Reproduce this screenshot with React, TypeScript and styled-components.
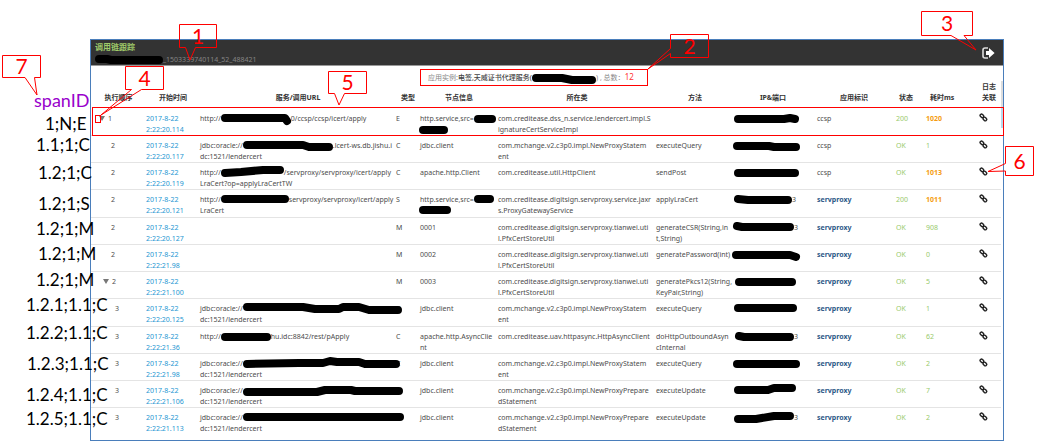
import React from "react";
import styled, { createGlobalStyle } from "styled-components";

const GlobalStyle = createGlobalStyle`
  * { box-sizing: border-box; }
  body {
    margin: 0;
    background: #fff;
    color: #555;
    font-family: "Noto Sans", "Noto Sans CJK SC", sans-serif;
    font-size: 7px;
    line-height: 11px;
  }
`;

const Page = styled.main`
  position: relative;
  padding: 39px 36px 0 90px;
`;

const Panel = styled.section`
  position: relative;
  border: 1px solid #4a7ebb;
  padding-bottom: 5px;
`;

const Header = styled.header`
  display: flex;
  align-items: center;
  justify-content: space-between;
  height: 26px;
  padding: 0 8px 0 4px;
  background: #333;
  border-bottom: 1px solid #999;
`;

const Title = styled.h1`
  margin: 0 0 2px;
  color: #a0cb6a;
  font-size: 8px;
  line-height: 11px;
  font-weight: 700;
`;

const TraceId = styled.p`
  margin: 0;
  color: #858585;
  white-space: nowrap;
`;

const ExitButton = styled.button`
  display: flex;
  padding: 0;
  border: 0;
  background: none;
`;

const Summary = styled.p`
  width: 228px;
  height: 17px;
  margin: 3px 0 0 329px;
  padding: 0 7px;
  border: 1px solid #f00;
  color: #888;
  line-height: 14px;
  white-space: nowrap;
  b { color: #444; font-weight: 500; }
  em { color: #f33; font-style: normal; font-size: 8px; }
`;

const Table = styled.table`
  width: 100%;
  margin-top: -5px;
  table-layout: fixed;
  border-collapse: separate;
  border-spacing: 0;
  padding-right: 2px;
`;

const HeadCell = styled.th<{ $left?: number; $tall?: boolean }>`
  height: 27px;
  padding: ${(p) => (p.$tall ? 0 : 5)}px 0 0 ${(p) => p.$left ?? 0}px;
  color: #333;
  font-weight: 700;
  vertical-align: ${(p) => (p.$tall ? "top" : "middle")};
  text-align: ${(p) => (p.$left === undefined ? "center" : "left")};
  white-space: nowrap;
`;

const Row = styled.tr`
  height: 27px;
  &:nth-child(4n) { height: 28px; }
  &:first-child td { border-top-color: transparent; }
`;

type Tone = "plain" | "time" | "ok" | "slow" | "app";
const tones: Record<Tone, string> = {
  plain: "#4c4c4c",
  time: "#2496d2",
  ok: "#98ca6c",
  slow: "#f59c11",
  app: "#2d5987",
};

const Cell = styled.td<{ $tone?: Tone; $left?: number }>`
  padding: 4px 0 0 ${(p) => p.$left ?? 0}px;
  border-top: 1px solid #e4e4e4;
  vertical-align: top;
  white-space: nowrap;
  color: ${(p) => tones[p.$tone ?? "plain"]};
  font-weight: ${(p) => (p.$tone === "slow" || p.$tone === "app" ? 700 : 400)};
`;

const LinkButton = styled.button`
  display: flex;
  padding: 0;
  border: 0;
  background: none;
  color: #222;
`;

const ScrollTrack = styled.span`
  position: absolute;
  right: 0;
  top: 41px;
  width: 2px;
  height: 47px;
  background: linear-gradient(#ddd 27px, #b5d9ee 27px);
`;

const InkBox = styled.span<{ $width: number }>`
  position: relative;
  z-index: 1;
  display: inline-block;
  width: ${(p) => p.$width}px;
  height: 8px;
  vertical-align: middle;
  svg { display: block; overflow: visible; }
`;

const Toggle = styled.span`
  display: inline-block;
  width: 0;
  height: 0;
  margin-right: 3px;
  border: 3px solid transparent;
  border-top: 5px solid #777;
  border-bottom: 0;
`;

const Labels = styled.ol`
  margin: 0;
  padding: 0;
  list-style: none;
`;

const Label = styled.li<{ $x: number; $y: number; $purple?: boolean }>`
  position: absolute;
  z-index: 2;
  left: ${(p) => p.$x}px;
  top: ${(p) => p.$y - 10}px;
  color: ${(p) => (p.$purple ? "#90c" : "#000")};
  font-family: Lato, sans-serif;
  font-size: ${(p) => (p.$purple ? 18 : 17)}px;
  line-height: 20px;
  white-space: nowrap;
`;

const Outline = styled.span<{ $x: number; $y: number; $w: number; $h: number }>`
  position: absolute;
  z-index: 2;
  left: ${(p) => p.$x}px;
  top: ${(p) => p.$y}px;
  width: ${(p) => p.$w}px;
  height: ${(p) => p.$h}px;
  border: 1px solid #f00;
`;

const RowOutline = styled.span`
  position: absolute;
  z-index: 2;
  left: 92px;
  right: 36px;
  top: 107px;
  height: 29px;
  border: 1px solid #f00;
  pointer-events: none;
`;

const CalloutBox = styled.span<{ $x: number; $y: number; $w: number; $h: number; $fromRight?: boolean }>`
  position: absolute;
  z-index: 3;
  ${(p) => (p.$fromRight ? "right" : "left")}: ${(p) => p.$x}px;
  top: ${(p) => p.$y}px;
  width: ${(p) => p.$w}px;
  height: ${(p) => p.$h}px;
  color: #f00;
  font-family: Lato, sans-serif;
  font-size: 21px;
  line-height: ${(p) => p.$h - 1}px;
  text-align: center;
  svg { position: absolute; left: 0; top: 0; overflow: visible; }
`;

type Ink = { w: number; d: string };

function Redaction({ w, d }: Ink) {
  return (
    <InkBox $width={w}>
      <svg width={w} height="8" fill="none" stroke="#000" strokeWidth="8" strokeLinecap="round" strokeLinejoin="round" aria-hidden="true">
        <path d={d} />
      </svg>
    </InkBox>
  );
}

function Callout({ n, d, ...box }: { n: number; d: string; x: number; y: number; w: number; h: number; right?: boolean }) {
  return (
    <CalloutBox $x={box.x} $y={box.y} $w={box.w} $h={box.h} $fromRight={box.right}>
      <svg width={box.w} height={box.h} fill="none" stroke="#f00" aria-hidden="true">
        <path d={d} />
      </svg>
      {n}
    </CalloutBox>
  );
}

function LinkIcon() {
  return (
    <svg width="9" height="9" viewBox="0 0 9 9" fill="none" stroke="currentColor" strokeWidth="1.4" aria-hidden="true">
      <rect x="-1.9" y="-1.4" width="3.8" height="2.8" rx="1.3" transform="translate(2.9 2.8) rotate(45)" />
      <rect x="-1.9" y="-1.4" width="3.8" height="2.8" rx="1.3" transform="translate(5.9 6) rotate(45)" />
    </svg>
  );
}

function ExitIcon() {
  return (
    <svg width="13" height="12" viewBox="0 0 13 12" aria-hidden="true">
      <path d="M6 1H3Q1 1 1 3V9Q1 11 3 11H6" fill="none" stroke="#ddd" strokeWidth="1.6" />
      <path d="M4 4H7V1L12.6 6L7 11V8H4Z" fill="#fff" />
    </svg>
  );
}

type Part = string | Ink;
type Span = {
  level: number;
  open?: boolean;
  time: string;
  url: Part[][];
  type: string;
  node: Part[][];
  cls: string[];
  method: string[];
  ip: Part[];
  app: string;
  status: string;
  cost: number;
};

const stmt = ["com.mchange.v2.c3p0.impl.NewProxyStatem", "ent"];
const prepared = ["com.mchange.v2.c3p0.impl.NewProxyPrepare", "dStatement"];
const pfx = ["com.creditease.digitsign.servproxy.tianwei.uti", "l.PfxCertStoreUtil"];

const spans: Span[] = [
  {
    level: 1, open: true, time: "2:22:20.114",
    url: [["http://", { w: 70, d: "M4 3H64L66 6" }, "0/ccsp/ccsp/icert/apply"]],
    type: "E",
    node: [["http.service,src=", { w: 22, d: "M4 4H18" }], [{ w: 28, d: "M3 4H24" }]],
    cls: ["com.creditease.dss_n.service.lendercert.impl.S", "ignatureCertServiceImpl"],
    method: [], ip: [{ w: 65, d: "M4 4H50L56 3L61 4" }], app: "ccsp", status: "200", cost: 1020,
  },
  {
    level: 2, time: "2:22:20.117",
    url: [["jdbc:oracle://", { w: 90, d: "M4 3H60L66 5H86" }, ".lcert-ws.db.jishu.i"], ["dc:1521/lendercert"]],
    type: "C", node: [["jdbc.client"]], cls: stmt, method: ["executeQuery"],
    ip: [{ w: 66, d: "M3 4H35L40 5H62" }], app: "ccsp", status: "OK", cost: 1,
  },
  {
    level: 2, time: "2:22:20.119",
    url: [["http://", { w: 63, d: "M4 4L20 3L42 1H59" }, "/servproxy/servproxy/icert/apply"], ["LraCert?op=applyLraCertTW"]],
    type: "C", node: [["apache.http.Client"]], cls: ["com.creditease.util.HttpClient"], method: ["sendPost"],
    ip: [{ w: 65, d: "M4 4H61" }], app: "ccsp", status: "OK", cost: 1013,
  },
  {
    level: 2, time: "2:22:20.121",
    url: [["http://", { w: 68, d: "M4 3H64" }, "servproxy/servproxy/icert/apply"], ["LraCert"]],
    type: "S", node: [["http.service,src=", { w: 19, d: "M4 3H16" }], [{ w: 30, d: "M3 3H27" }]],
    cls: ["com.creditease.digitsign.servproxy.service.jaxr", "s.ProxyGatewayService"], method: ["applyLraCert"],
    ip: [{ w: 58, d: "M4 3L14 4H54" }, "3"], app: "servproxy", status: "200", cost: 1011,
  },
  {
    level: 2, time: "2:22:20.127", url: [], type: "M", node: [["0001"]], cls: pfx, method: ["generateCSR(String,in", "t,String)"],
    ip: [{ w: 60, d: "M3 2L8 3H56" }, "3"], app: "servproxy", status: "OK", cost: 908,
  },
  {
    level: 2, time: "2:22:21.98", url: [], type: "M", node: [["0002"]], cls: pfx, method: ["generatePassword(int)"],
    ip: [{ w: 66, d: "M2 4H56L62 6" }], app: "servproxy", status: "OK", cost: 0,
  },
  {
    level: 2, open: true, time: "2:22:21.100", url: [], type: "M", node: [["0003"]], cls: pfx, method: ["generatePkcs12(String,", "KeyPair,String)"],
    ip: [{ w: 62, d: "M5 4H58" }], app: "servproxy", status: "OK", cost: 5,
  },
  {
    level: 3, time: "2:22:20.125",
    url: [["jdbc:oracle://", { w: 159, d: "M4 2H60L72 4H96L100 2H116L126 5H155" }], ["dc:1521/lendercert"]],
    type: "C", node: [["jdbc.client"]], cls: stmt, method: ["executeQuery"],
    ip: [{ w: 63, d: "M4 3H59" }], app: "servproxy", status: "OK", cost: 1,
  },
  {
    level: 3, time: "2:22:21.36",
    url: [["http://", { w: 50, d: "M4 4H46" }, "hu.idc:8842/rest/pApply"]],
    type: "C", node: [["apache.http.AsyncClie"], ["nt"]], cls: ["com.creditease.uav.httpasync.HttpAsyncClient"],
    method: ["doHttpOutboundAsyn", "cInternal"],
    ip: [{ w: 60, d: "M5 3L10 4H56" }, "3"], app: "servproxy", status: "OK", cost: 62,
  },
  {
    level: 3, time: "2:22:21.98",
    url: [["jdbc:oracle://", { w: 157, d: "M4 4L56 3H80L87 1L94 2H116L122 4H153" }], ["dc:1521/lendercert"]],
    type: "C", node: [["jdbc.client"]], cls: stmt, method: ["executeQuery"],
    ip: [{ w: 66, d: "M3 4H62" }], app: "servproxy", status: "OK", cost: 2,
  },
  {
    level: 3, time: "2:22:21.106",
    url: [["jdbc:oracle://", { w: 160, d: "M4 5H74L82 3H108L112 4H156" }], ["dc:1521/lendercert"]],
    type: "C", node: [["jdbc.client"]], cls: prepared, method: ["executeUpdate"],
    ip: [{ w: 62, d: "M4 3H34L40 1H58" }], app: "servproxy", status: "OK", cost: 7,
  },
  {
    level: 3, time: "2:22:21.113",
    url: [["jdbc:oracle://", { w: 161, d: "M4 3H157" }], ["dc:1521/lendercert"]],
    type: "C", node: [["jdbc.client"]], cls: prepared, method: ["executeUpdate"],
    ip: [{ w: 60, d: "M4 5H22L40 2H56" }, "3"], app: "servproxy", status: "OK", cost: 2,
  },
];

function Parts({ parts }: { parts: Part[] }) {
  return <>{parts.map((p, i) => (typeof p === "string" ? <span key={i}>{p}</span> : <Redaction key={i} {...p} />))}</>;
}

function Lines({ lines }: { lines: Part[][] }) {
  return <>{lines.map((l, i) => <React.Fragment key={i}>{i > 0 && <br />}<Parts parts={l} /></React.Fragment>)}</>;
}

const widths = [55, 54, 196, 24, 78, 158, 78, 78, 84, 30, 52, 23];
const labels: [number, number, string][] = [
  [34, 100, "spanID"], [45, 124, "1;N;E"], [36, 145, "1.1;1;C"], [38, 173, "1.2;1;C"],
  [38, 204, "1.2;1;S"], [36, 229, "1.2;1;M"], [38, 254, "1.2;1;M"], [36, 280, "1.2;1;M"],
  [26, 305, "1.2.1;1.1;C"], [26, 333, "1.2.2;1.1;C"], [27, 364, "1.2.3;1.1;C"],
  [26, 395, "1.2.4;1.1;C"], [26, 419, "1.2.5;1.1;C"],
];

export default function App() {
  return (
    <Page>
      <GlobalStyle />
      <Panel>
        <Header>
          <div>
            <Title>调用链跟踪</Title>
            <TraceId>
              <Redaction w={68} d="M4 3L12 3L16 4H64" />
              _1503339740114_52_488421
            </TraceId>
          </div>
          <ExitButton aria-label="退出"><ExitIcon /></ExitButton>
        </Header>
        <Summary>
          应用实例:<b>电签,天威证书代理服务(</b>
          <Redaction w={64} d="M4 4H30L40 6H60" />
          ) , 总数：<em>12</em>
        </Summary>
        <Table>
          <colgroup>{widths.map((w, i) => <col key={i} style={{ width: w }} />)}</colgroup>
          <thead>
            <tr>
              <HeadCell>执行顺序</HeadCell>
              <HeadCell>开始时间</HeadCell>
              <HeadCell>服务/调用URL</HeadCell>
              <HeadCell $left={5}>类型</HeadCell>
              <HeadCell>节点信息</HeadCell>
              <HeadCell>所在类</HeadCell>
              <HeadCell>方法</HeadCell>
              <HeadCell>IP&amp;端口</HeadCell>
              <HeadCell>应用标识</HeadCell>
              <HeadCell $left={3}>状态</HeadCell>
              <HeadCell $left={4}>耗时ms</HeadCell>
              <HeadCell $left={4} $tall>日志<br />关联</HeadCell>
            </tr>
          </thead>
          <tbody>
            {spans.map((s, i) => (
              <Row key={i}>
                <Cell $left={s.open ? 4 + s.level * 4 : 12 + s.level * 4}>
                  {s.open && <Toggle />}{s.level}
                </Cell>
                <Cell $tone="time">2017-8-22<br />{s.time}</Cell>
                <Cell><Lines lines={s.url} /></Cell>
                <Cell>{s.type}</Cell>
                <Cell><Lines lines={s.node} /></Cell>
                <Cell><Lines lines={s.cls.map((c) => [c])} /></Cell>
                <Cell><Lines lines={s.method.map((m) => [m])} /></Cell>
                <Cell><Parts parts={s.ip} /></Cell>
                <Cell $left={5} $tone={s.app === "servproxy" ? "app" : "plain"}>{s.app}</Cell>
                <Cell $tone="ok">{s.status}</Cell>
                <Cell $tone={s.cost > 1000 ? "slow" : "ok"}>{s.cost}</Cell>
                <Cell $left={1}><LinkButton aria-label="日志关联"><LinkIcon /></LinkButton></Cell>
              </Row>
            ))}
          </tbody>
        </Table>
        <ScrollTrack />
      </Panel>
      <Labels>
        {labels.map(([x, y, text], i) => <Label key={i} $x={x} $y={y} $purple={i === 0}>{text}</Label>)}
      </Labels>
      <RowOutline />
      <Outline $x={95} $y={115} $w={6} $h={8} />
      <Callout n={1} x={179} y={24} w={38} h={24} d="M6.5 23.5H.5V.5H37.5V23.5H16.5L11 36L6.5 23.5" />
      <Callout n={2} x={670} y={34} w={39} h={24} d="M.5 14.5V.5H38.5V23.5H.5V19.5L-22 35L.5 14.5" />
      <Callout n={3} x={67} y={11} w={52} h={25} right d="M30 24.5H.5V.5H51.5V24.5H43L55 39L30 24.5" />
      <Callout n={4} x={125} y={66} w={39} h={24} d="M6.5 23.5H.5V.5H38.5V23.5H16.5L-24 49L6.5 23.5" />
      <Callout n={5} x={328} y={71} w={39} h={23} d="M6.5 22.5H.5V.5H38.5V22.5H16.5L11 34L6.5 22.5" />
      <Callout n={6} x={6} y={146} w={29} h={30} right d="M.5 17.5V.5H28.5V29.5H.5V25L-17 25.5L.5 17.5" />
      <Callout n={7} x={2} y={55} w={39} h={23} d="M23 22.5H.5V.5H38.5V22.5H32.5L35 40L23 22.5" />
    </Page>
  );
}
